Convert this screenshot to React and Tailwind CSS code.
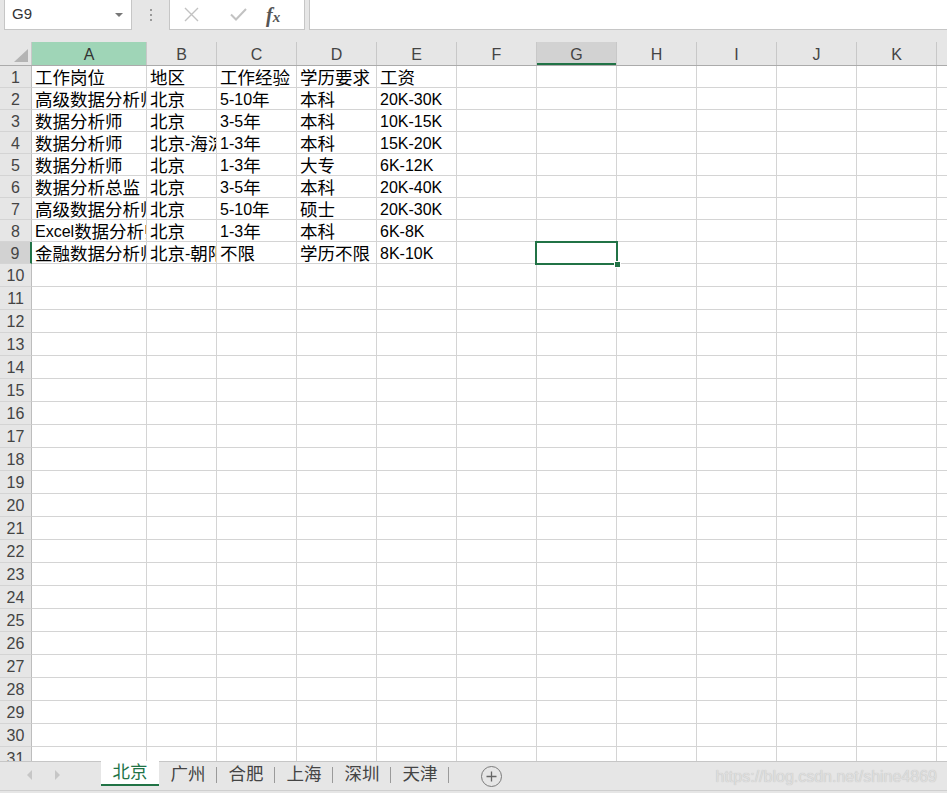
import React from "react";

const CJK = /([\u4e00-\u9fff]+)/;

// split text so chinese runs get the slightly larger size excel shows
function Mixed({ text }) {
  return text
    .split(CJK)
    .filter(Boolean)
    .map((s, i) =>
      CJK.test(s) ? (
        <span key={i} className="text-[17.5px]">{s}</span>
      ) : (
        <span key={i}>{s}</span>
      )
    );
}

const cols = [
  { id: "A", w: "w-[115px]" },
  { id: "B", w: "w-[70px]" },
  { id: "C", w: "w-[80px]" },
  { id: "D", w: "w-[80px]" },
  { id: "E", w: "w-[80px]" },
  { id: "F", w: "w-[80px]" },
  { id: "G", w: "w-[80px]" },
  { id: "H", w: "w-[80px]" },
  { id: "I", w: "w-[80px]" },
  { id: "J", w: "w-[80px]" },
  { id: "K", w: "w-[80px]" },
  { id: "", w: "w-[80px]" },
];

const data = [
  ["工作岗位", "地区", "工作经验", "学历要求", "工资"],
  ["高级数据分析师", "北京", "5-10年", "本科", "20K-30K"],
  ["数据分析师", "北京", "3-5年", "本科", "10K-15K"],
  ["数据分析师", "北京-海淀", "1-3年", "本科", "15K-20K"],
  ["数据分析师", "北京", "1-3年", "大专", "6K-12K"],
  ["数据分析总监", "北京", "3-5年", "本科", "20K-40K"],
  ["高级数据分析师", "北京", "5-10年", "硕士", "20K-30K"],
  ["Excel数据分析师", "北京", "1-3年", "本科", "6K-8K"],
  ["金融数据分析师", "北京-朝阳", "不限", "学历不限", "8K-10K"],
];

const tabs = ["北京", "广州", "合肥", "上海", "深圳", "天津"];

const font = "font-['Liberation_Sans','Noto_Sans_CJK_SC',sans-serif]";

function TopBar() {
  return (
    <div className="h-[42px] bg-[#e6e6e6] flex items-start shrink-0">
      {/* name box */}
      <div className="ml-[4px] w-[128px] h-[30px] bg-white border border-t-0 border-[#c6c6c6] flex items-center justify-between pl-[7px] pr-[8px]">
        <span className="text-[15px] text-[#333]">G9</span>
        <span className="w-0 h-0 border-l-[4px] border-r-[4px] border-t-[4px] border-l-transparent border-r-transparent border-t-[#777]" />
      </div>
      <div className="w-[37px] h-[30px] flex flex-col items-center justify-center gap-[3px]">
        <span className="w-[2px] h-[2px] bg-[#999]" />
        <span className="w-[2px] h-[2px] bg-[#999]" />
        <span className="w-[2px] h-[2px] bg-[#999]" />
      </div>
      {/* formula buttons */}
      <div className="w-[136px] h-[30px] bg-white border border-t-0 border-[#c6c6c6] flex items-center">
        <svg className="ml-[14px]" width="15" height="15" viewBox="0 0 15 15">
          <path d="M1 1L14 14M14 1L1 14" stroke="#c2c2c2" strokeWidth="1.4" fill="none" />
        </svg>
        <svg className="ml-[31px]" width="17" height="13" viewBox="0 0 17 13">
          <path d="M1 6.5L6 11.5L16 1" stroke="#c2c2c2" strokeWidth="2" fill="none" />
        </svg>
        <span className="ml-[19px] text-[20px] italic font-bold text-[#555] font-['Liberation_Serif',serif] leading-none">
          f<span className="text-[15px]">x</span>
        </span>
      </div>
      <div className="ml-[4px] flex-1 h-[30px] bg-white border border-t-0 border-r-0 border-[#c6c6c6]" />
    </div>
  );
}

function HeaderRow() {
  return (
    <div className="flex h-[24px] shrink-0 bg-[#e6e6e6] border-b border-[#ababab]">
      <div className="w-[32px] shrink-0 border-r border-[#c8c8c8] relative">
        <svg className="absolute right-[3px] bottom-[3px]" width="14" height="13" viewBox="0 0 14 13">
          <path d="M14 0V13H0Z" fill="#b4b4b4" />
        </svg>
      </div>
      {cols.map((c) => {
        let cls = "bg-[#e6e6e6] text-[#444]";
        if (c.id === "A") cls = "bg-[#9fd5b7] text-[#333]";
        if (c.id === "G") cls = "bg-[#d2d2d2] text-[#444] shadow-[inset_0_-2px_0_#217346]";
        return (
          <div
            key={c.id + c.w}
            className={`${c.w} shrink-0 border-r border-[#c8c8c8] flex items-center justify-center pt-[2px] text-[16px] ${cls}`}
          >
            {c.id}
          </div>
        );
      })}
    </div>
  );
}

function Row({ n }) {
  const vals = data[n - 1] || [];
  const h = n <= 9 ? "h-[22px]" : "h-[23px]";
  const sel = n === 9;
  return (
    <div className={`flex ${h} shrink-0`}>
      <div
        className={`w-[32px] shrink-0 border-b border-[#d4d4d4] flex items-center justify-center pt-[2px] text-[16px] text-[#444] ${
          sel ? "bg-[#d2d2d2] border-r-2 border-r-[#217346]" : "bg-[#e6e6e6] border-r border-r-[#bdbdbd]"
        }`}
      >
        {n}
      </div>
      {cols.map((c, i) => (
        <div key={i} className={`${c.w} shrink-0 border-r border-b border-[#d4d4d4] relative`}>
          <div className="h-full px-[3px] pt-[3px] flex items-center overflow-hidden whitespace-nowrap text-[16px] text-black">
            {vals[i] ? <Mixed text={vals[i]} /> : null}
          </div>
          {sel && c.id === "G" ? (
            <div className="absolute left-[-2px] top-[-1px] w-[83px] h-[24px] border-2 border-[#217346] z-10">
              <span className="absolute right-[-5px] bottom-[-5px] w-[7px] h-[7px] bg-[#217346] border border-white" />
            </div>
          ) : null}
        </div>
      ))}
    </div>
  );
}

function TabBar() {
  return (
    <div className="h-[32px] shrink-0 bg-[#e6e6e6] border-t border-[#c6c6c6] flex items-start relative">
      <div className="w-[101px] h-[25px] flex items-center">
        <span className="ml-[27px] w-0 h-0 border-t-[5px] border-b-[5px] border-r-[5px] border-t-transparent border-b-transparent border-r-[#c6c6c6]" />
        <span className="ml-[23px] w-0 h-0 border-t-[5px] border-b-[5px] border-l-[5px] border-t-transparent border-b-transparent border-l-[#c6c6c6]" />
      </div>
      <div className="w-[58px] h-[25px] bg-white border-b-2 border-[#217346] flex items-center justify-center text-[17.5px] text-[#217346] -mt-[1px]">
        北京
      </div>
      {tabs.slice(1).map((t) => (
        <div key={t} className="w-[58px] h-[25px] flex items-center justify-center relative text-[17.5px] text-[#444]">
          {t}
          <span className="absolute right-0 top-[5px] w-px h-[16px] bg-[#9a9a9a]" />
        </div>
      ))}
      <div className="ml-[32px] mt-[4px] w-[21px] h-[21px] rounded-full border border-[#7a7a7a] flex items-center justify-center">
        <svg width="11" height="11" viewBox="0 0 11 11">
          <path d="M5.5 0.5V10.5M0.5 5.5H10.5" stroke="#666" strokeWidth="1.3" />
        </svg>
      </div>
      <div className="flex-1" />
      <span className="mr-[10px] mt-[3px] text-[16px] text-[#dedede] [text-shadow:0_0_1px_#b8b8b8]">
        https://blog.csdn.net/shine4869
      </span>
      <div className="absolute left-0 right-0 bottom-[2px] h-px bg-[#cfcfcf]" />
    </div>
  );
}

export default function App() {
  const rows = Array.from({ length: 31 }, (_, i) => i + 1);
  return (
    <div className={`w-[947px] h-[793px] flex flex-col overflow-hidden bg-white ${font}`}>
      <TopBar />
      <div className="flex-1 overflow-hidden flex flex-col">
        <HeaderRow />
        {rows.map((n) => (
          <Row key={n} n={n} />
        ))}
      </div>
      <TabBar />
    </div>
  );
}
